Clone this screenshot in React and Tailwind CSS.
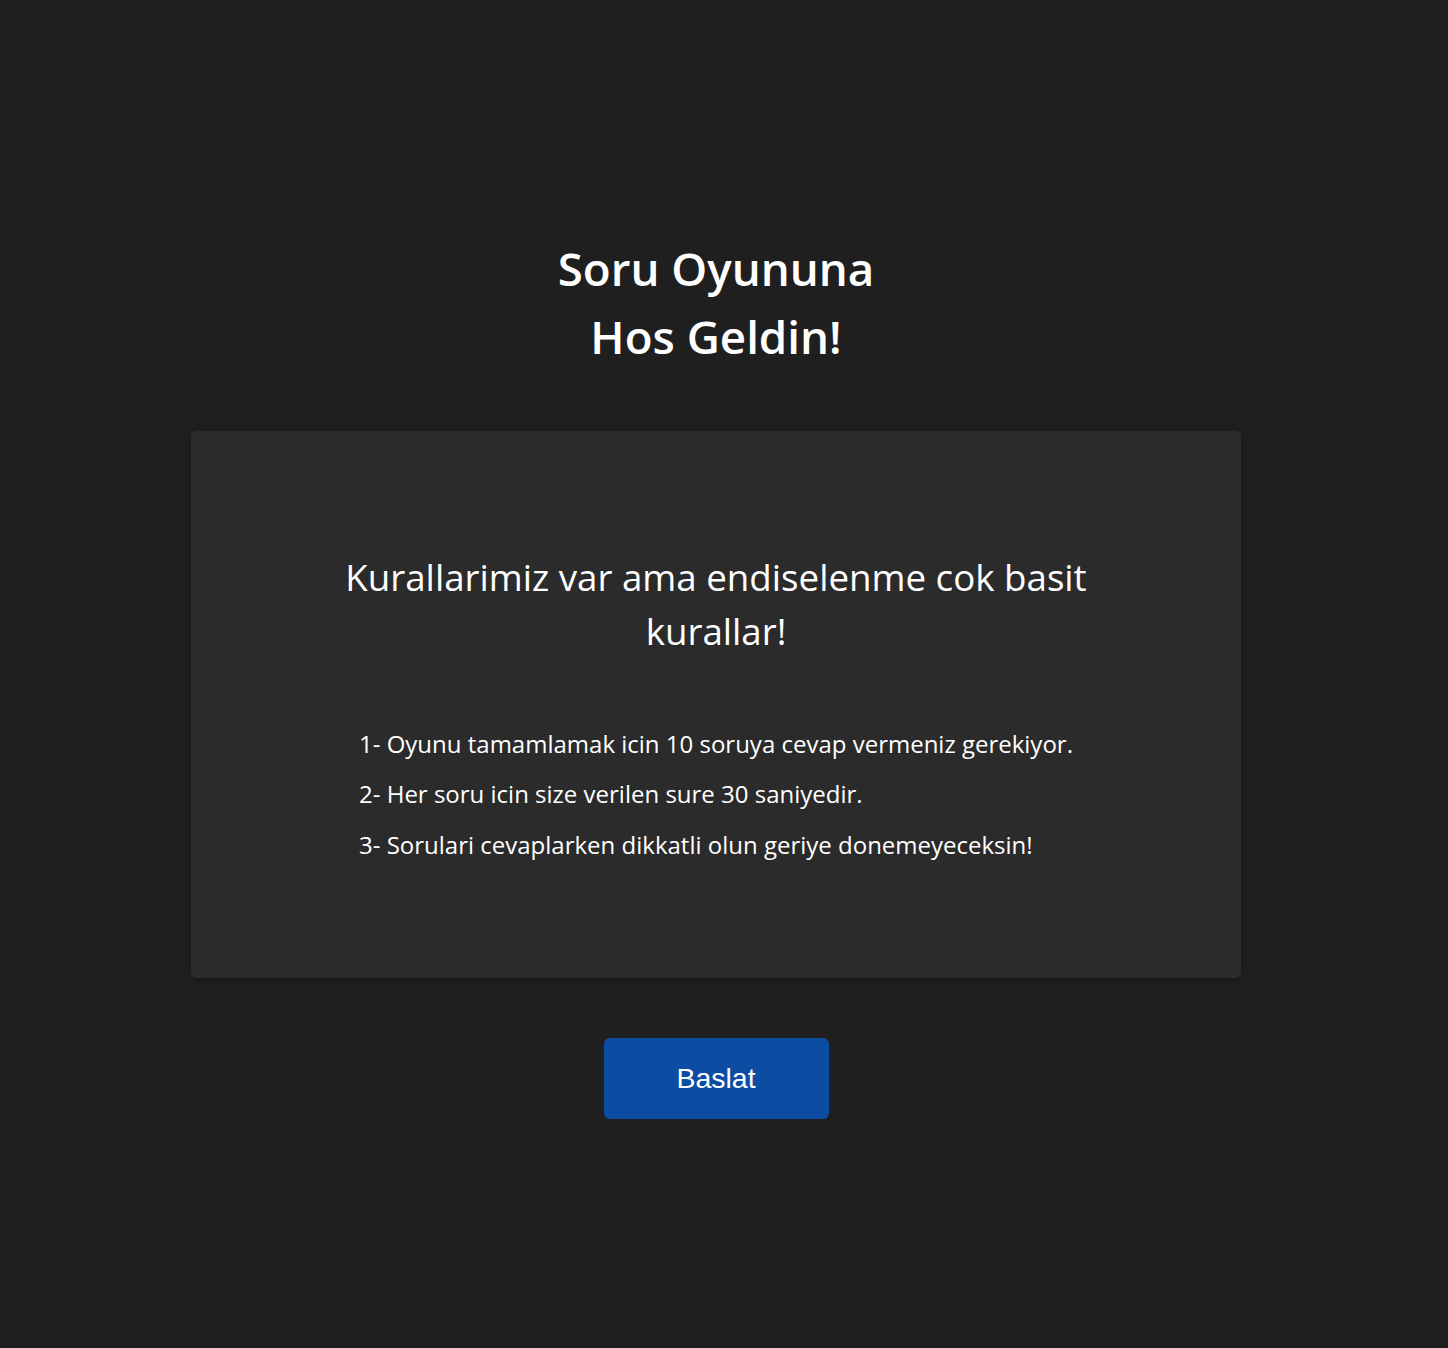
export default function App() {
  return (
    <div className="min-h-[1348px] w-full bg-[#1f1f1f] pr-[16px]" style={{ fontFamily: '"Open Sans", "Noto Sans", sans-serif' }}>
      <div className="w-full flex flex-col items-center text-white">
        <h1 className="mt-[234px] text-[45.7px] leading-[68px] font-semibold text-center">
          Soru Oyununa
          <br />
          Hos Geldin!
        </h1>
        <div className="mt-[61px] w-[1050px] h-[547px] bg-[#2b2b2b] rounded-md shadow-[0_2px_8px_rgba(0,0,0,0.25)] pt-[119px] flex flex-col items-center">
          <h2 className="w-[800px] text-center text-[36.7px] leading-[54px] font-normal">
            Kurallarimiz var ama endiselenme cok basit kurallar!
          </h2>
          <ul className="mt-[61px] w-[730px] self-start ml-[168px] text-[24px] leading-[50px]">
            <li>1- Oyunu tamamlamak icin 10 soruya cevap vermeniz gerekiyor.</li>
            <li>2- Her soru icin size verilen sure 30 saniyedir.</li>
            <li className="mt-px">3- Sorulari cevaplarken dikkatli olun geriye donemeyeceksin!</li>
          </ul>
        </div>
        <button className="mt-[60px] w-[225px] h-[81px] bg-[#0d4ca3] rounded-md text-white text-[28.5px]" style={{ fontFamily: '"Liberation Sans", Arial, sans-serif' }}>
          Baslat
        </button>
      </div>
    </div>
  );
}
